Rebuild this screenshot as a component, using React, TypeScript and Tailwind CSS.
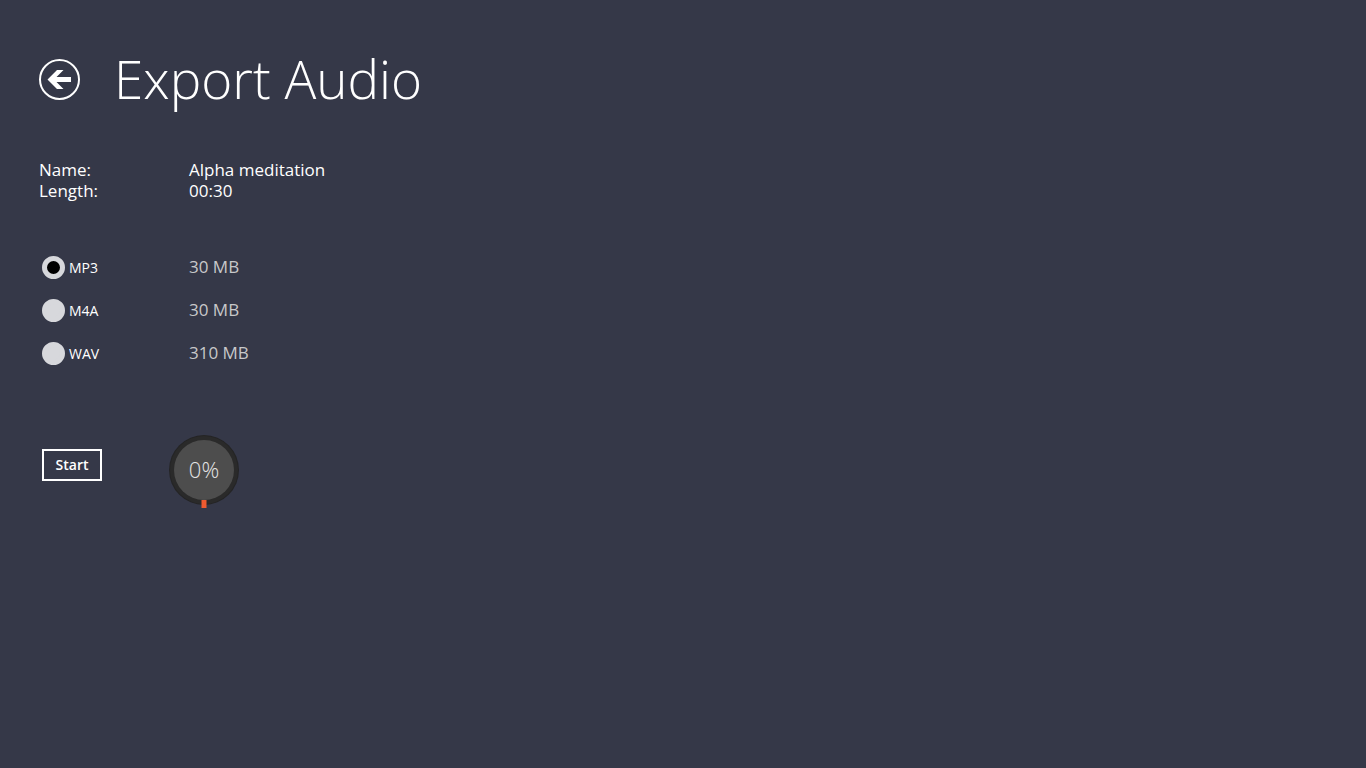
import { useState } from "react";

const formats = [
  { id: "mp3", label: "MP3", size: "30 MB" },
  { id: "m4a", label: "M4A", size: "30 MB" },
  { id: "wav", label: "WAV", size: "310 MB" },
];

function BackButton() {
  return (
    <button type="button" aria-label="Back" className="size-[41px] shrink-0">
      <svg viewBox="0 0 41 41" className="size-full">
        <circle cx="20.5" cy="20.5" r="19.5" fill="none" stroke="#fff" strokeWidth="2" />
        <path d="M8.5 20.5 L18 11 H24.5 L17.5 18 H32 V23 H17.5 L24.5 30 H18 Z" fill="#fff" />
      </svg>
    </button>
  );
}

function ProgressDial({ value }: { value: number }) {
  return (
    <div
      role="progressbar"
      aria-label="Export progress"
      aria-valuenow={value}
      className="relative grid h-[74px] w-[70px] grid-rows-[68px] place-items-center"
    >
      <svg viewBox="0 0 70 74" className="absolute inset-0 size-full">
        <circle cx="35" cy="35" r="35" fill="#242425" />
        <circle cx="35" cy="35" r="34" fill="#2a2a2a" />
        <circle cx="35" cy="35" r="30" fill="#4d4d4d" />
        <rect x="32.5" y="65" width="5" height="8" fill="#ee5a30" />
      </svg>
      <span className="relative text-[22px] leading-7 font-light text-[#e4e4e4]">{value}%</span>
    </div>
  );
}

export default function App() {
  const [format, setFormat] = useState("mp3");

  return (
    <main className="min-h-screen bg-[#353848] px-[39px] pt-[39px] font-['Open_Sans','Noto_Sans',sans-serif] text-white">
      <header className="flex h-20 items-center gap-[34px]">
        <BackButton />
        <h1 className="text-[53px] leading-20 font-light">Export Audio</h1>
      </header>

      <dl className="mt-10 grid grid-cols-[150px_1fr] text-[17px] leading-[21px]">
        <dt>Name:</dt>
        <dd>Alpha meditation</dd>
        <dt>Length:</dt>
        <dd>00:30</dd>
      </dl>

      <fieldset aria-label="Format" className="mt-[45px]">
        {formats.map((f) => (
          <div key={f.id} className="grid h-[43px] grid-cols-[150px_1fr] items-center">
            <label htmlFor={f.id} className="flex items-center gap-1 pl-[3px] text-sm">
              <input
                type="radio"
                id={f.id}
                name="format"
                checked={format === f.id}
                onChange={() => setFormat(f.id)}
                className="size-[23px] appearance-none rounded-full border-[5px] border-[#d7d8dc] bg-[#d7d8dc] checked:bg-black"
              />
              {f.label}
            </label>
            <span className="pb-0.5 text-[17px] leading-[21px] text-[#c8c8ca]">{f.size}</span>
          </div>
        ))}
      </fieldset>

      <div className="mt-15 flex items-start gap-[67px] pl-[3px]">
        <button
          type="button"
          className="mt-[14px] h-8 w-15 border-2 border-white text-sm leading-5 font-semibold"
        >
          Start
        </button>
        <ProgressDial value={0} />
      </div>
    </main>
  );
}
